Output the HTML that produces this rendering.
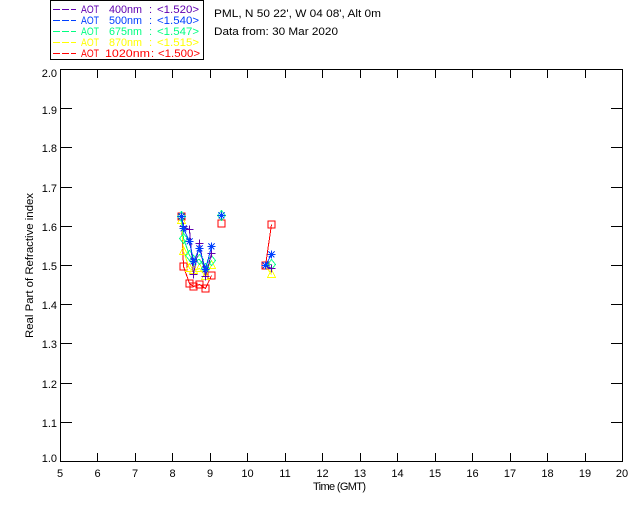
<!DOCTYPE html>
<html><head><meta charset="utf-8"><style>
html,body{margin:0;padding:0;background:#fff}
svg{display:block}
text{font-family:"Liberation Sans",sans-serif;font-size:11px;fill:#000}
.l,.s{fill:none;shape-rendering:crispEdges;stroke-width:1}
.yl text{text-anchor:end}
.xl text{text-anchor:middle}
</style></head><body>
<svg width="640" height="512" viewBox="0 0 640 512" xmlns="http://www.w3.org/2000/svg">
<defs>
<path id="sq" d="M-3.5-3.5H3.5V3.5H-3.5Z"/>
<path id="tri" d="M0-5L4 3H-4Z"/>
<path id="dia" d="M0-5L4 0L0 5L-4 0Z"/>
<path id="plus" d="M-4 0H4M0-4V4"/>
<path id="star" d="M-4 0H4M0-4V4M-3-3L3 3M-3 3L3-3"/>
</defs>
<rect x="50.5" y="0.5" width="153" height="59" fill="none" stroke="#000" shape-rendering="crispEdges"/>
<g class="l" stroke-dasharray="7 2">
<path d="M53 9.5H76" stroke="#6000b0"/>
<path d="M53 20.5H76" stroke="#0040ff"/>
<path d="M53 31.5H76" stroke="#00ff80"/>
<path d="M53 42.5H76" stroke="#ffff00"/>
<path d="M53 53.5H76" stroke="#ff0000"/>
</g>
<g><text x="81" y="13" style="fill:#6000b0" textLength="18" lengthAdjust="spacingAndGlyphs">AOT</text><text x="109" y="13" style="fill:#6000b0" textLength="33" lengthAdjust="spacingAndGlyphs">400nm</text><text x="149" y="13" style="fill:#6000b0">:</text><text x="157" y="13" style="fill:#6000b0" textLength="42" lengthAdjust="spacingAndGlyphs">&lt;1.520&gt;</text></g>
<g><text x="81" y="24" style="fill:#0040ff" textLength="18" lengthAdjust="spacingAndGlyphs">AOT</text><text x="109" y="24" style="fill:#0040ff" textLength="33" lengthAdjust="spacingAndGlyphs">500nm</text><text x="149" y="24" style="fill:#0040ff">:</text><text x="157" y="24" style="fill:#0040ff" textLength="42" lengthAdjust="spacingAndGlyphs">&lt;1.540&gt;</text></g>
<g><text x="81" y="35" style="fill:#00ff80" textLength="18" lengthAdjust="spacingAndGlyphs">AOT</text><text x="109" y="35" style="fill:#00ff80" textLength="33" lengthAdjust="spacingAndGlyphs">675nm</text><text x="149" y="35" style="fill:#00ff80">:</text><text x="157" y="35" style="fill:#00ff80" textLength="42" lengthAdjust="spacingAndGlyphs">&lt;1.547&gt;</text></g>
<g><text x="81" y="46" style="fill:#ffff00" textLength="18" lengthAdjust="spacingAndGlyphs">AOT</text><text x="109" y="46" style="fill:#ffff00" textLength="33" lengthAdjust="spacingAndGlyphs">870nm</text><text x="149" y="46" style="fill:#ffff00">:</text><text x="157" y="46" style="fill:#ffff00" textLength="42" lengthAdjust="spacingAndGlyphs">&lt;1.515&gt;</text></g>
<g><text x="81" y="57" style="fill:#ff0000" textLength="18" lengthAdjust="spacingAndGlyphs">AOT</text><text x="105" y="57" style="fill:#ff0000" textLength="45" lengthAdjust="spacingAndGlyphs">1020nm</text><text x="151" y="57" style="fill:#ff0000">:</text><text x="158" y="57" style="fill:#ff0000" textLength="42" lengthAdjust="spacingAndGlyphs">&lt;1.500&gt;</text></g>
<text x="214" y="17" textLength="167" lengthAdjust="spacingAndGlyphs">PML, N 50 22', W 04 08', Alt 0m</text>
<text x="214" y="35" textLength="124" lengthAdjust="spacingAndGlyphs">Data from: 30 Mar 2020</text>

<path class="l" stroke="#000" d="M60.5 69.5H622.5V461.5H60.5Z
M97.5 461V453M135.5 461V453M172.5 461V453M210.5 461V453M247.5 461V453M285.5 461V453M322.5 461V453M360.5 461V453M397.5 461V453M435.5 461V453M472.5 461V453M510.5 461V453M547.5 461V453M585.5 461V453
M97.5 70V78M135.5 70V78M172.5 70V78M210.5 70V78M247.5 70V78M285.5 70V78M322.5 70V78M360.5 70V78M397.5 70V78M435.5 70V78M472.5 70V78M510.5 70V78M547.5 70V78M585.5 70V78
M61 108.5H72M61 147.5H72M61 187.5H72M61 226.5H72M61 265.5H72M61 304.5H72M61 343.5H72M61 383.5H72M61 422.5H72
M622 108.5H611M622 147.5H611M622 187.5H611M622 226.5H611M622 265.5H611M622 304.5H611M622 343.5H611M622 383.5H611M622 422.5H611"/>

<g class="yl">
<text x="57" y="77">2.0</text><text x="57" y="114">1.9</text><text x="57" y="152">1.8</text><text x="57" y="192">1.7</text><text x="57" y="231">1.6</text><text x="57" y="270">1.5</text><text x="57" y="309">1.4</text><text x="57" y="348">1.3</text><text x="57" y="388">1.2</text><text x="57" y="427">1.1</text><text x="57" y="462">1.0</text>
</g>
<g class="xl">
<text x="60" y="477">5</text><text x="97.5" y="477">6</text><text x="135" y="477">7</text><text x="172.5" y="477">8</text><text x="210" y="477">9</text><text x="247.5" y="477">10</text><text x="285" y="477">11</text><text x="322.5" y="477">12</text><text x="360" y="477">13</text><text x="397.5" y="477">14</text><text x="435" y="477">15</text><text x="472.5" y="477">16</text><text x="510" y="477">17</text><text x="547.5" y="477">18</text><text x="585" y="477">19</text><text x="622" y="477">20</text>
</g>
<text x="313" y="490" textLength="53" lengthAdjust="spacing">Time (GMT)</text>
<text transform="translate(33 338) rotate(-90)" textLength="145" lengthAdjust="spacingAndGlyphs">Real Part of Refractive index</text>

<g class="s" stroke="#ff0000">
<path d="M181.5 216.5L183.5 266.5L189.5 283.5L193.5 286.5L199.5 284.5L205.5 288.5L211.5 275.5M265.5 265.5L271.5 224.5"/>
<use href="#sq" x="181.5" y="216.5"/><use href="#sq" x="183.5" y="266.5"/><use href="#sq" x="189.5" y="283.5"/><use href="#sq" x="193.5" y="286.5"/><use href="#sq" x="199.5" y="284.5"/><use href="#sq" x="205.5" y="288.5"/><use href="#sq" x="211.5" y="275.5"/><use href="#sq" x="221.5" y="223.5"/><use href="#sq" x="265.5" y="265.5"/><use href="#sq" x="271.5" y="224.5"/>
</g>
<g class="s" stroke="#ffff00">
<path d="M181.5 220.5L183.5 251.5L189.5 268.5L193.5 270.5L199.5 268.5L205.5 276.5L211.5 265.5M265.5 265.5L271.5 274.5"/>
<use href="#tri" x="181.5" y="220.5"/><use href="#tri" x="183.5" y="251.5"/><use href="#tri" x="189.5" y="268.5"/><use href="#tri" x="193.5" y="270.5"/><use href="#tri" x="199.5" y="268.5"/><use href="#tri" x="205.5" y="276.5"/><use href="#tri" x="211.5" y="265.5"/><use href="#tri" x="271.5" y="274.5"/>
</g>
<g class="s" stroke="#00ff80">
<path d="M181.5 216.5L183.5 238.5L189.5 255.5L193.5 260.5L199.5 259.5L205.5 268.5L211.5 260.5M265.5 265.5L271.5 264.5"/>
<use href="#dia" x="181.5" y="216.5"/><use href="#dia" x="183.5" y="238.5"/><use href="#dia" x="189.5" y="255.5"/><use href="#dia" x="193.5" y="260.5"/><use href="#dia" x="199.5" y="259.5"/><use href="#dia" x="205.5" y="268.5"/><use href="#dia" x="211.5" y="260.5"/><use href="#dia" x="221.5" y="215.5"/><use href="#dia" x="271.5" y="264.5"/>
</g>
<g class="s" stroke="#6000b0">
<path d="M181.5 216.5L183.5 226.5L189.5 229.5L193.5 274.5L199.5 243.5L205.5 276.5L211.5 253.5M265.5 265.5L271.5 268.5"/>
<use href="#plus" x="183.5" y="226.5"/><use href="#plus" x="189.5" y="229.5"/><use href="#plus" x="193.5" y="274.5"/><use href="#plus" x="199.5" y="243.5"/><use href="#plus" x="205.5" y="276.5"/><use href="#plus" x="211.5" y="253.5"/><use href="#plus" x="271.5" y="268.5"/>
</g>
<g class="s" stroke="#0040ff">
<path d="M181.5 216.5L183.5 228.5L189.5 241.5L193.5 261.5L199.5 248.5L205.5 269.5L211.5 246.5M265.5 265.5L271.5 254.5"/>
<use href="#star" x="181.5" y="216.5"/><use href="#star" x="183.5" y="228.5"/><use href="#star" x="189.5" y="241.5"/><use href="#star" x="193.5" y="261.5"/><use href="#star" x="199.5" y="248.5"/><use href="#star" x="205.5" y="269.5"/><use href="#star" x="211.5" y="246.5"/><use href="#star" x="221.5" y="215.5"/><use href="#star" x="265.5" y="265.5"/><use href="#star" x="271.5" y="254.5"/>
</g>
</svg>
</body></html>
